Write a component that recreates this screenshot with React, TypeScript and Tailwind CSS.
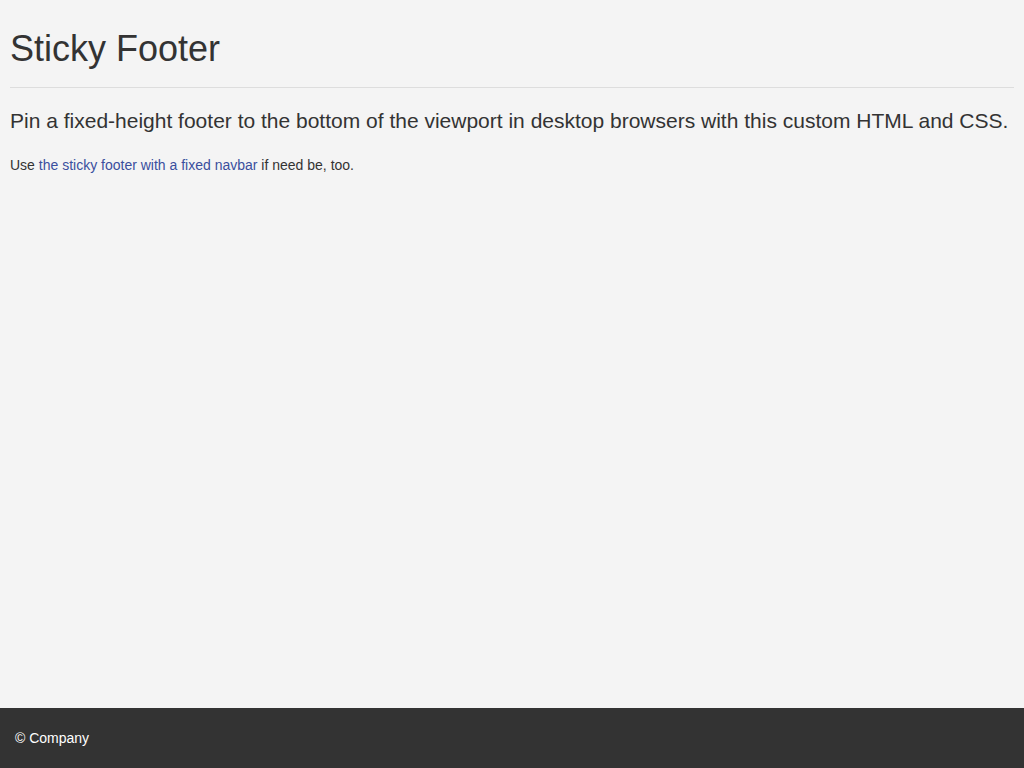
export default function App() {
  return (
    <div
      className="min-h-screen flex flex-col bg-[#f4f4f4] text-[#333333]"
      style={{ fontFamily: '"Liberation Sans", Arial, sans-serif' }}
    >
      <main className="flex-1 px-[10px] pt-[29px]">
        <div className="border-b border-[#dddddd] pb-[18px]">
          <h1 className="text-[36px] leading-[40px] font-normal">Sticky Footer</h1>
        </div>
        <p className="mt-[18px] text-[21px] leading-[29.4px]">
          Pin a fixed-height footer to the bottom of the viewport in desktop browsers with this custom HTML and CSS.
        </p>
        <p className="mt-[20px] text-[14px] leading-[20px]">
          Use <a href="#" className="text-[#3a4f9e]">the sticky footer with a fixed navbar</a> if need be, too.
        </p>
      </main>
      <footer className="h-[60px] bg-[#333333] flex items-center px-[15px]">
        <p className="text-white text-[14px] leading-[20px]">© Company</p>
      </footer>
    </div>
  );
}
